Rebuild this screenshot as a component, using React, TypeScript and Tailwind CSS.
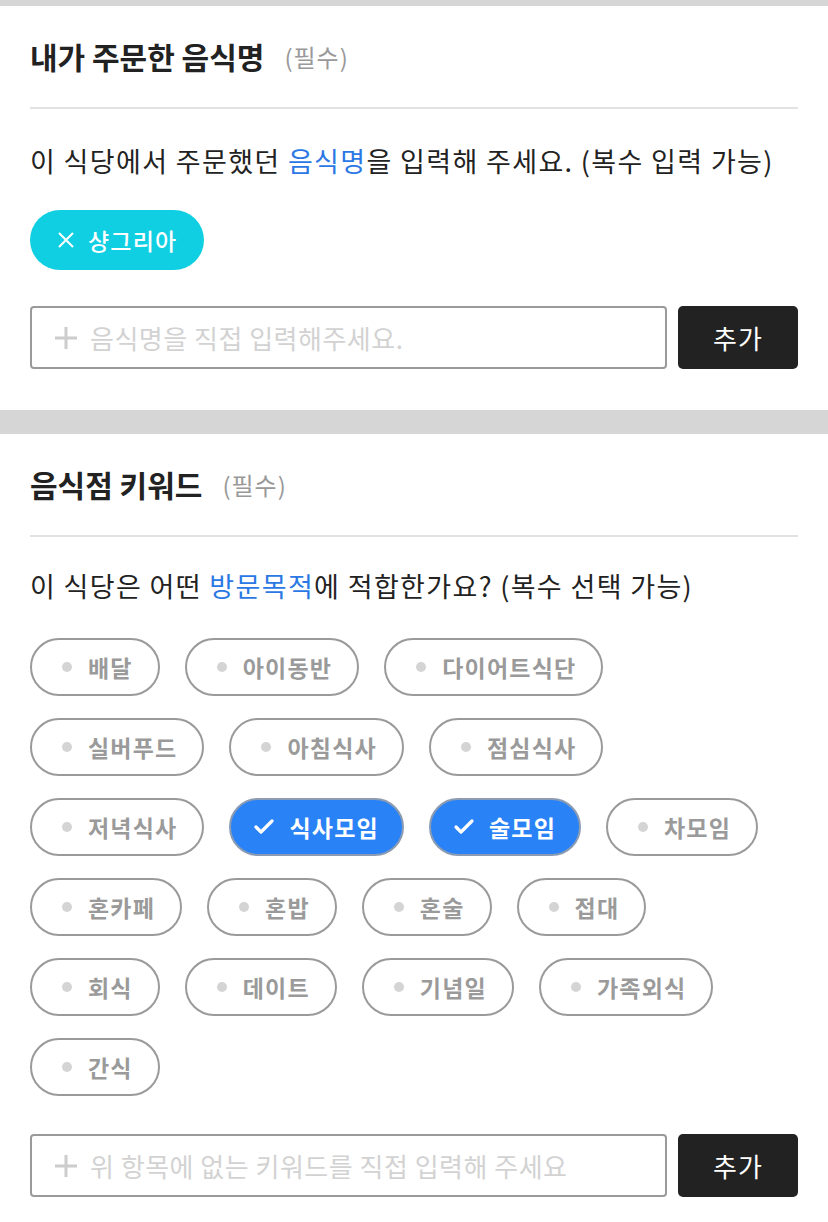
import React, { useState } from 'react';
import { Check } from 'lucide-react';

const KEYWORDS = [
  '배달', '아이동반', '다이어트식단',
  '실버푸드', '아침식사', '점심식사',
  '저녁식사', '식사모임', '술모임', '차모임',
  '혼카페', '혼밥', '혼술', '접대',
  '회식', '데이트', '기념일', '가족외식',
  '간식',
];

const SectionHeader = ({ title }: { title: string }) => (
  <div className="flex items-center border-b-2 border-[#e2e2e2] h-[103px]">
    <h2 className="text-[30px] font-bold text-[#222] tracking-[0px]">{title}</h2>
    <span className="ml-[20px] text-[24px] text-[#999] tracking-[1px]">(필수)</span>
  </div>
);

const PlusIcon = () => (
  <svg width="24" height="24" viewBox="0 0 24 24" className="shrink-0">
    <path d="M12 1v22M1 12h22" stroke="#cccccc" strokeWidth="3" />
  </svg>
);

const AddInput = ({ placeholder }: { placeholder: string }) => (
  <div className="flex gap-[11px]">
    <div className="flex-1 h-[63px] flex items-center border-2 border-[#9a9a9a] rounded-[4px] pl-[22px]">
      <PlusIcon />
      <input
        type="text"
        placeholder={placeholder}
        className="ml-[12px] flex-1 min-w-0 bg-transparent outline-none text-[26px] tracking-[0.5px] placeholder:text-[#d2d2d2]"
      />
    </div>
    <button className="w-[120px] h-[63px] bg-[#222222] rounded-[5px] text-white text-[26px] tracking-[1px]">추가</button>
  </div>
);

export default function App() {
  const [selected, setSelected] = useState<string[]>(['식사모임', '술모임']);

  const toggle = (k: string) =>
    setSelected((s) => (s.includes(k) ? s.filter((x) => x !== k) : [...s, k]));

  return (
    <div className="w-[828px] bg-white font-['Noto_Sans_CJK_KR','Noto_Sans',sans-serif] text-[#222]">
      <div className="h-[6px] bg-[#d6d6d6]" />

      {/* 음식명 */}
      <section className="px-[30px] pb-[41px]">
        <SectionHeader title="내가 주문한 음식명" />
        <p className="mt-[34px] text-[27px] leading-[36px] tracking-[1.35px]">
          이 식당에서 주문했던 <span className="text-[#2b78e4]">음식명</span>을 입력해 주세요. (복수 입력 가능)
        </p>
        <div className="mt-[31px] flex">
          <span className="h-[60px] flex items-center rounded-full bg-[#10cfe3] pl-[28px] pr-[27px] text-white text-[23px] font-medium tracking-[1.2px]">
            <svg width="16" height="16" viewBox="0 0 16 16" className="shrink-0">
              <path d="M1 1l14 14M15 1L1 15" stroke="white" strokeWidth="2" />
            </svg>
            <span className="ml-[14px]">샹그리아</span>
          </span>
        </div>
        <div className="mt-[36px]">
          <AddInput placeholder="음식명을 직접 입력해주세요." />
        </div>
      </section>

      <div className="h-[24px] bg-[#d6d6d6]" />

      {/* 키워드 */}
      <section className="px-[30px] pb-[24px]">
        <SectionHeader title="음식점 키워드" />
        <p className="mt-[31px] text-[27px] leading-[36px] tracking-[1.35px]">
          이 식당은 어떤 <span className="text-[#2b78e4]">방문목적</span>에 적합한가요? (복수 선택 가능)
        </p>
        <div className="mt-[34px] flex flex-wrap gap-x-[25px] gap-y-[22px]">
          {KEYWORDS.map((k) => {
            const on = selected.includes(k);
            return on ? (
              <button
                key={k}
                onClick={() => toggle(k)}
                className="h-[58px] flex items-center rounded-full border-2 border-[#8b9bb2] bg-[#2a82f7] pl-[21px] pr-[23px] text-white text-[23px] font-bold tracking-[1.2px]"
              >
                <Check className="h-[24px] w-[24px]" strokeWidth={3.2} />
                <span className="ml-[13px]">{k}</span>
              </button>
            ) : (
              <button
                key={k}
                onClick={() => toggle(k)}
                className="h-[58px] flex items-center rounded-full border-2 border-[#9a9a9a] bg-white pl-[30px] pr-[25px] text-[#9a9a9a] text-[23px] font-bold tracking-[1.2px]"
              >
                <span className="h-[10px] w-[10px] rounded-full bg-[#d4d4d4]" />
                <span className="ml-[16px]">{k}</span>
              </button>
            );
          })}
        </div>
        <div className="mt-[38px]">
          <AddInput placeholder="위 항목에 없는 키워드를 직접 입력해 주세요" />
        </div>
      </section>
    </div>
  );
}
